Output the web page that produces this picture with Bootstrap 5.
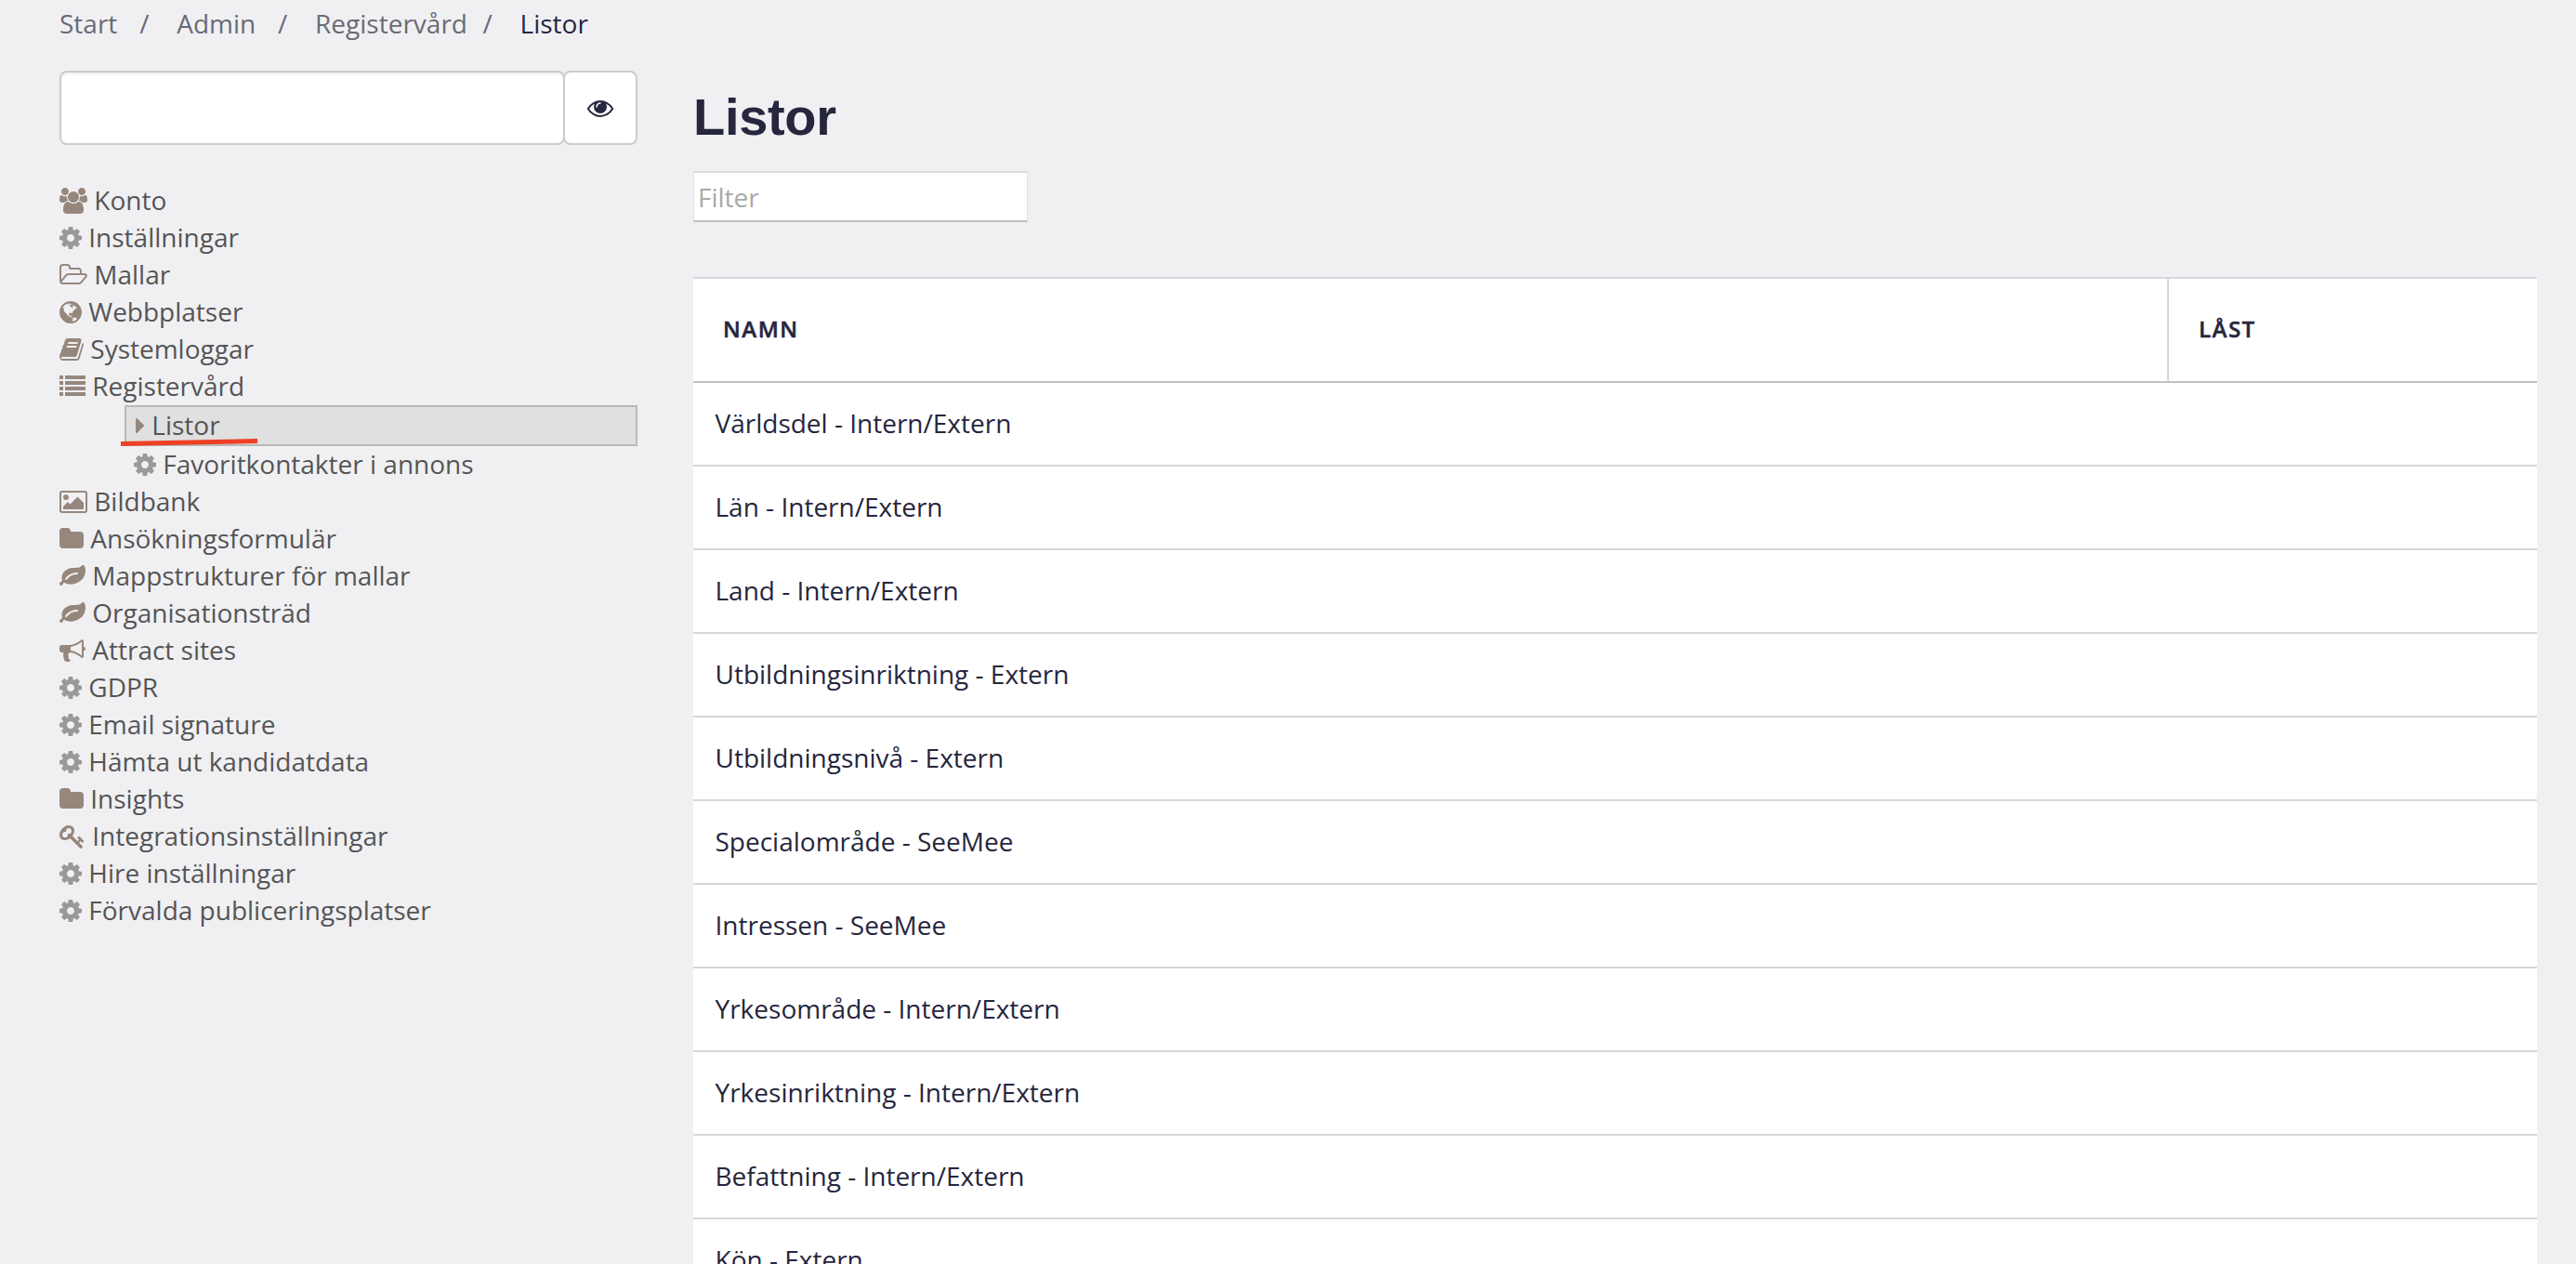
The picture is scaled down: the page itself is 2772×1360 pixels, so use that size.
<!DOCTYPE html>
<html lang="sv">
<head>
  <meta charset="UTF-8" />
  <meta name="viewport" content="width=device-width, initial-scale=1.0"/>
  <title>Listor - Registervård</title>
  <link href="https://cdn.jsdelivr.net/npm/bootstrap@5.3.2/dist/css/bootstrap.min.css" rel="stylesheet" />
  <style>
    body {
      background-color: #f0f0f3;
      color: #26263d;
      font-family: "Open Sans", sans-serif;
      font-size: 28px;
      line-height: 40px;
      height: 100vh;
      overflow: hidden;
    }
    .page {
      padding: 6px 42px 0 64px;
    }
    .crumbs {
      height: 40px;
      line-height: 38px;
      color: #6a6a75;
    }
    .crumbs a {
      color: inherit;
      text-decoration: none;
    }
    .slash {
      margin: 0 29.8px 0 23.8px;
    }
    .slash-tight {
      margin-left: 16.5px;
    }
    .crumbs .current {
      color: #26263d;
    }
    .sidebar {
      width: 622px;
      margin-top: 30px;
    }
    .search-field,
    .search-btn {
      height: 80px;
      border: 2px solid #ccc;
      border-radius: 8px;
      background: #fff;
    }
    .search-field {
      width: 544px;
      box-shadow: inset 0 2px 2px rgba(0,0,0,0.075);
    }
    .search-btn {
      width: 80px;
      margin-left: -2px;
      color: #26263d;
    }
    .menu {
      margin-top: 40px;
      color: #555;
    }
    .menu li {
      height: 40px;
      line-height: 38px;
      white-space: nowrap;
    }
    .menu .sub {
      margin-left: 70px;
      padding-left: 10px;
    }
    .menu .active-item {
      height: 44px;
      background: #e0e0e0;
      border: 2px solid #b9b9b9;
    }
    .ico {
      height: 28px;
      fill: #96877d;
      vertical-align: -4px;
    }
    .ico-cog {
      fill: #999;
    }
    .ico-eye {
      fill: #26263d;
    }
    /* handritad markering över menyvalet */
    .marker {
      position: absolute;
      left: -9px;
      top: 33px;
      width: 150px;
      height: 10px;
      fill: #ee4024;
    }
    .content {
      margin-left: 60px;
      margin-top: 30px;
    }
    .content h1 {
      font-family: "Liberation Sans", sans-serif;
      font-size: 56px;
      font-weight: 700;
      line-height: 64px;
      letter-spacing: -0.3px;
      margin: 18px 0 26px;
    }
    .filter-field {
      width: 360px;
      height: 55px;
      padding: 0 4px;
      border: 1px solid #e2e2e5;
      border-top: 2px solid #dcdce0;
      border-bottom: 2px solid #bebebe;
      border-radius: 0;
      font-size: 28px;
      line-height: 40px;
    }
    .filter-field::placeholder {
      color: #a9a9a9;
    }
    .lists {
      margin-top: 59px;
      background: #fff;
      border-top: 2px solid #d6d6dc;
    }
    .lists-head {
      height: 112px;
      font-size: 24px;
      font-weight: 600;
      letter-spacing: 1.5px;
      line-height: 108px;
      -webkit-text-stroke: 0.5px #26263d;
    }
    .lists-head div {
      border-bottom: 2px solid #c0c0c0;
      padding-left: 32px;
    }
    .lists-head .col-locked {
      width: 398px;
      border-left: 2px solid #d6d6dc;
    }
    .lists-row {
      height: 90px;
      padding-left: 23.5px;
      line-height: 86px;
      border-bottom: 2px solid #d6d6dc;
    }
  </style>
</head>
<body>
  <div class="page">
    <!-- Brödsmulor -->
    <nav class="crumbs d-flex">
      <a href="#">Start</a><span class="slash">/</span>
      <a href="#">Admin</a><span class="slash">/</span>
      <a href="#">Registervård</a><span class="slash slash-tight">/</span>
      <span class="current">Listor</span>
    </nav>

    <div class="d-flex align-items-start">
      <!-- Vänstermeny -->
      <aside class="sidebar flex-shrink-0">
        <div class="d-flex">
          <input type="text" class="search-field" aria-label="Sök">
          <button class="search-btn d-flex align-items-center justify-content-center p-0" id="searchBtn" aria-label="Visa"></button>
        </div>
        <ul class="menu list-unstyled mb-0" id="menu"></ul>
      </aside>

      <!-- Innehåll -->
      <main class="content flex-grow-1">
        <h1>Listor</h1>
        <input type="text" class="filter-field form-control" placeholder="Filter">
        <div class="lists">
          <div class="lists-head d-flex">
            <div class="flex-grow-1">NAMN</div>
            <div class="col-locked">LÅST</div>
          </div>
          <div id="rows"></div>
        </div>
      </main>
    </div>
  </div>

  <script src="https://cdn.jsdelivr.net/npm/bootstrap@5.3.2/dist/js/bootstrap.bundle.min.js"></script>
  <script>
    // x = vänsterkant i ritytan, w = bredd (64 enheter = 1px)
    const icons = {
      eye: { x: 0, w: 1792, d: "M1664 960q-152-236-381-353 61 104 61 225 0 185-131.5 316.5t-316.5 131.5-316.5-131.5-131.5-316.5q0-121 61-225-229 117-381 353 133 205 333.5 326.5t434.5 121.5 434.5-121.5 333.5-326.5zm-720-384q0-20-14-34t-34-14q-125 0-214.5 89.5t-89.5 214.5q0 20 14 34t34 14 34-14 14-34q0-86 61-147t147-61q20 0 34-14t14-34zm848 384q0 34-20 69-140 230-376.5 368.5t-499.5 138.5-499.5-139-376.5-368q-20-35-20-69t20-69q140-229 376.5-368t499.5-139 499.5 139 376.5 368q20 35 20 69z" },
      cog: { x: 128, w: 1536, d: "M1152 896q0-106-75-181t-181-75-181 75-75 181 75 181 181 75 181-75 75-181zm512-109v222q0 12-8 23t-20 13l-185 28q-19 54-39 91 35 50 107 138 10 12 10 25t-9 23q-27 37-99 108t-94 71q-12 0-26-9l-138-108q-44 23-91 38-16 136-29 186-7 28-36 28h-222q-14 0-24.5-8.5t-11.5-21.5l-28-184q-49-16-90-37l-141 107q-10 9-25 9-14 0-25-11-126-114-165-168-7-10-7-23 0-12 8-23 15-21 51-66.5t54-70.5q-27-50-41-99l-183-27q-13-2-21-12.5t-8-23.5v-222q0-12 8-23t19-13l186-28q14-46 39-92-40-57-107-138-10-12-10-24 0-10 9-23 26-36 98.5-107.5t94.5-71.5q13 0 26 10l138 107q44-23 91-38 16-136 29-186 7-28 36-28h222q14 0 24.5 8.5t11.5 21.5l28 184q49 16 90 37l142-107q9-9 24-9 13 0 25 10 129 119 165 170 7 8 7 22 0 12-8 23-15 21-51 66.5t-54 70.5q26 50 41 98l183 28q13 2 21 12.5t8 23.5z" },
      users: { x: -64, w: 1920, d: "M529 896q-162 5-265 128h-134q-82 0-138-40.5t-56-118.5q0-353 124-353 6 0 43.5 21t97.5 42.5 119 21.5q67 0 133-23-5 37-5 66 0 139 81 256zm1071 637q0 120-73 189.5t-194 69.5h-874q-121 0-194-69.5t-73-189.5q0-53 3.5-103.5t14-109 26.5-108.5 43-97.5 62-81 85.5-53.5 111.5-20q10 0 43 21.5t73 48 107 48 135 21.5 135-21.5 107-48 73-48 43-21.5q61 0 111.5 20t85.5 53.5 62 81 43 97.5 26.5 108.5 14 109 3.5 103.5zm-1024-1277q0 106-75 181t-181 75-181-75-75-181 75-181 181-75 181 75 75 181zm704 384q0 159-112.5 271.5t-271.5 112.5-271.5-112.5-112.5-271.5 112.5-271.5 271.5-112.5 271.5 112.5 112.5 271.5zm576 225q0 78-56 118.5t-138 40.5h-134q-103-123-265-128 81-117 81-256 0-29-5-66 66 23 133 23 59 0 119-21.5t97.5-42.5 43.5-21q124 0 124 353zm-128-609q0 106-75 181t-181 75-181-75-75-181 75-181 181-75 181 75 75 181z" },
      folderOpen: { x: 64, w: 1920, d: "M1845 931q0-35-53-35h-1088q-40 0-85.5 21.5t-71.5 52.5l-294 363q-18 24-18 40 0 35 53 35h1088q40 0 86-22t71-53l294-363q18-22 18-39zm-1141-163h768v-160q0-40-28-68t-68-28h-576q-40 0-68-28t-28-68v-64q0-40-28-68t-68-28h-320q-40 0-68 28t-28 68v853l256-315q44-53 116-87.5t140-34.5zm1269 163q0 62-46 120l-295 363q-43 53-116 87.5t-140 34.5h-1088q-92 0-158-66t-66-158v-960q0-92 66-158t158-66h320q92 0 158 66t66 158v32h544q92 0 158 66t66 158v160h192q54 0 99 24.5t67 70.5q15 32 15 68z" },
      globe: { x: 128, w: 1536, d: "M896 128q209 0 385.5 103t279.5 279.5 103 385.5-103 385.5-279.5 279.5-385.5 103-385.5-103-279.5-279.5-103-385.5 103-385.5 279.5-279.5 385.5-103zm274 521q-2 1-9.5 9.5t-13.5 9.5q2 0 4.5-5t5-11 3.5-7q6-7 22-15 14-6 52-12 34-8 51 11-2-2 9.5-13t14.5-12q3-2 15-4.5t15-7.5l2-22q-12 1-17.5-7t-6.5-21q0 2-6 8 0-7-4.5-8t-11.5 1-9 1q-10-3-15-7.5t-8-16.5-4-15q-2-5-9.5-11t-9.5-10q-1-2-2.5-5.5t-3-6.5-4-5.5-5.5-2.5-7 5-7.5 10-4.5 5q-3-2-6-1.5t-4.5 1-4.5 3-5 3.5q-3 2-8.5 3t-8.5 2q15-5-1-11-10-4-16-3 9-4 7.5-12t-8.5-14h5q-1-4-8.5-8.5t-17.5-8.5-13-6q-8-5-34-9.5t-33-.5q-5 6-4.5 10.5t4 14 3.5 12.5q1 6-5.5 13t-6.5 12q0 7 14 15.5t10 21.5q-3 8-16 16t-16 12q-5 8-1.5 18.5t10.5 16.5q2 2 1.5 4t-3.5 4.5-5.5 4-6.5 3.5l-3 2q-11 5-20.5-6t-13.5-26q-7-25-16-30-23-8-29 1-5-13-41-26-25-9-58-4 6-1 0-15-7-15-19-12 3-6 4-17.5t1-13.5q3-13 12-23 1-1 7-8.5t9.5-13.5.5-6q35 4 50-11 5-5 11.5-17t10.5-17q9-6 14-5.5t14.5 5.5 14.5 5q14 1 15.5-11t-7.5-20q12 1 3-17-4-7-8-9-12-4-27 5-8 4 2 8-1-1-9.5 10.5t-16.5 17.5-16-5q-1-1-5.5-13.5t-9.5-13.5q-8 0-16 15 3-8-11-15t-24-8q19-12-8-27-7-4-20.5-5t-19.5 4q-5 7-5.5 11.5t5 8 10.5 5.5 11.5 4 8.5 3q14 10 8 14-2 1-8.5 3.5t-11.5 4.5-6 4q-3 4 0 14t-2 14q-5-5-9-17.5t-7-16.5q7 9-25 6l-10-1q-4 0-16 2t-20.5 1-13.5-8q-4-8 0-20 1-4 4-2-4-3-11-9.5t-10-8.5q-46 15-94 41 6 1 12-1 5-2 13-6.5t10-5.5q34-14 42-7l5-5q14 16 20 25-7-4-30-1-20 6-22 12 7 12 5 18-4-3-11.5-10t-14.5-11-15-5q-16 0-22 1-146 80-235 222 7 7 12 8 4 1 5 9t2.5 11 11.5-3q9 8 3 19 1-1 44 27 19 17 21 21 3 11-10 18-1-2-9-9t-9-4q-3 5 .5 18.5t10.5 12.5q-7 0-9.5 16t-2.5 35.5-1 23.5l2 1q-3 12 5.5 34.5t21.5 19.5q-13 3 20 43 6 8 8 9 3 2 12 7.5t15 10 10 10.5q4 5 10 22.5t14 23.5q-2 6 9.5 20t10.5 23q-1 0-2.5 1t-2.5 1q3 7 15.5 14t15.5 13q1 3 2 10t3 11 8 2q2-20-24-62-15-25-17-29-3-5-5.5-15.5t-4.5-14.5q2 0 6 1.5t8.5 3.5 7.5 4 2 3q-3 7 2 17.5t12 18.5 17 19 12 13q6 6 14 19.5t0 13.5q9 0 20 10t17 20q5 8 8 26t5 24q2 7 8.5 13.5t12.5 9.5l16 8 13 7q5 2 18.5 10.5t21.5 11.5q10 4 16 4t14.5-2.5 13.5-3.5q15-2 29 15t21 21q36 19 55 11-2 1 .5 7.5t8 15.5 9 14.5 5.5 8.5q5 6 18 15t18 15q6-4 7-9-3 8 7 20t18 10q14-3 14-32-31 15-49-18 0-1-2.5-5.5t-4-8.5-2.5-8.5 0-7.5 5-3q9 0 10-3.5t-2-12.5-4-13q-1-8-11-20t-12-15q-5 9-16 8t-16-9q0 1-1.5 5.5t-1.5 6.5q-13 0-15-1 1-3 2.5-17.5t3.5-22.5q1-4 5.5-12t7.5-14.5 4-12.5-4.5-9.5-17.5-2.5q-19 1-26 20-1 3-3 10.5t-5 11.5-9 7q-7 3-24 2t-24-5q-13-8-22.5-29t-9.5-37q0-10 2.5-26.5t3-25-5.5-24.5q3-2 9-9.5t10-10.5q2-1 4.5-1.5t4.5 0 4-1.5 3-6q-1-1-4-3-3-3-4-3 7 3 28.5-1.5t27.5 1.5q15 11 22-2 0-1-2.5-9.5t-.5-13.5q5 27 29 9 3 3 15.5 5t17.5 5q3 2 7 5.5t5.5 4.5 5-.5 8.5-6.5q10 14 12 24 11 40 19 44 7 3 11 2t4.5-9.5 0-14-1.5-12.5l-1-8v-18l-1-8q-15-3-18.5-12t1.5-18.5 15-18.5q1-1 8-3.5t15.5-6.5 12.5-8q21-19 15-35 7 0 11-9-1 0-5-3t-7.5-5-4.5-2q9-5 2-16 5-3 7.5-11t7.5-10q9 12 21 2 7-8 1-16 5-7 20.5-10.5t18.5-9.5q7 2 8-2t1-12 3-12q4-5 15-9t13-5l17-11q3-4 0-4 18 2 31-11 10-11-6-20 3-6-3-9.5t-15-5.5q3-1 11.5-.5t10.5-1.5q15-10-7-16-17-5-43 12zm-163 877q206-36 351-189-3-3-12.5-4.5t-12.5-3.5q-18-7-24-8 1-7-2.5-13t-8-9-12.5-8-11-7q-2-2-7-6t-7-5.5-7.5-4.5-8.5-2-10 1l-3 1q-3 1-5.5 2.5t-5.5 3-4 3 0 2.5q-21-17-36-22-5-1-11-5.5t-10.5-7-10-1.5-11.5 7q-5 5-6 15t-2 13q-7-5 0-17.5t2-18.5q-3-6-10.5-4.5t-12 4.5-11.5 8.5-9 6.5-8.5 5.5-8.5 7.5q-3 4-6 12t-5 11q-2-4-11.5-6.5t-9.5-5.5q2 10 4 35t5 38q7 31-12 48-27 25-29 40-4 22 12 26 0 7-8 20.5t-7 21.5q0 6 2 16z" },
      book: { x: 64, w: 1664, d: "M1703 478q40 57 18 129l-275 906q-19 64-76.5 107.5t-122.5 43.5h-923q-77 0-148.5-53.5t-99.5-131.5q-24-67-2-127 0-4 3-27t4-37q1-8-3-21.5t-3-19.5q2-11 8-21t16.5-23.5 16.5-23.5q23-38 45-91.5t30-91.5q3-10 .5-30t-.5-28q3-11 17-28t17-23q21-36 42-92t25-90q1-9-2.5-32t.5-28q4-13 22-30.5t22-22.5q19-26 42.5-84.5t27.5-96.5q1-8-3-25.5t-2-26.5q2-8 9-18t18-23 17-21q8-12 16.5-30.5t15-35 16-36 19.5-32 26.5-23.5 36-11.5 47.5 5.5l-1 3q38-9 51-9h761q74 0 114 56t18 130l-274 906q-36 119-71.5 153.5t-128.5 34.5h-869q-27 0-38 15-11 16-1 43 24 70 144 70h923q29 0 56-15.5t35-41.5l300-987q7-22 5-57 38 15 59 43zm-1064 2q-4 13 2 22.5t20 9.5h608q13 0 25.5-9.5t16.5-22.5l21-64q4-13-2-22.5t-20-9.5h-608q-13 0-25.5 9.5t-16.5 22.5zm-83 256q-4 13 2 22.5t20 9.5h608q13 0 25.5-9.5t16.5-22.5l21-64q4-13-2-22.5t-20-9.5h-608q-13 0-25.5 9.5t-16.5 22.5z" },
      list: { x: 0, w: 1792, d: "M0 128h256v256H0zM384 128h1408v256H384zM0 512h256v256H0zM384 512h1408v256H384zM0 896h256v256H0zM384 896h1408v256H384zM0 1280h256v256H0zM384 1280h1408v256H384z" },
      caret: { x: 0, w: 640, d: "M576 896q0 26-19 45l-448 448q-19 19-45 19t-45-19-19-45v-896q0-26 19-45t45-19 45 19l448 448q19 19 19 45z" },
      image: { x: -64, w: 1920, d: "M576 576q0 80-56 136t-136 56-136-56-56-136 56-136 136-56 136 56 56 136zm1024 384v448h-1408v-192l320-320 160 160 512-512zm96-704h-1600q-13 0-22.5 9.5t-9.5 22.5v1216q0 13 9.5 22.5t22.5 9.5h1600q13 0 22.5-9.5t9.5-22.5v-1216q0-13-9.5-22.5t-22.5-9.5zm160 32v1216q0 66-47 113t-113 47h-1600q-66 0-113-47t-47-113v-1216q0-66 47-113t113-47h1600q66 0 113 47t47 113z" },
      folder: { x: 64, w: 1664, d: "M1728 608v704q0 92-66 158t-158 66h-1216q-92 0-158-66t-66-158v-960q0-92 66-158t158-66h320q92 0 158 66t66 158v32h672q92 0 158 66t66 158z" },
      leaf: { x: 0, w: 1792, d: "M1280 704q0-26-19-45t-45-19q-172 0-318 49.5t-259.5 134-235.5 219.5q-19 21-19 45 0 26 19 45t45 19q24 0 45-19 27-24 74-71t67-66q137-124 268.5-176t313.5-52q26 0 45-19t19-45zm512-198q0 95-20 193-46 224-184.5 383t-357.5 268q-214 108-438 108-148 0-286-47-15-5-88-42t-96-37q-16 0-39.5 32t-45 70-52.5 70-60 32q-43 0-63.5-17.5t-45.5-59.5q-2-4-6-11t-5.5-10-3-9.5-1.5-13.5q0-35 31-73.5t68-65.5 68-56 31-48q0-4-14-38t-16-44q-9-51-9-104 0-115 43.5-220t119-184.5 170.5-139 204-95.5q55-18 145-25.5t179.5-9 178.5-6 163.5-24 113.5-56.5l29.5-29.5 29.5-28 27-20 36.5-16 43.5-4.5q39 0 70.5 46t47.5 112 24 124 8 96z" },
      bullhorn: { x: 0, w: 1792, d: "M1664 640q53 0 90.5 37.5t37.5 90.5-37.5 90.5-90.5 37.5v384q0 52-38 90t-90 38q-417-347-812-380-58 19-91 66t-31 100.5 40 92.5q-20 33-23 65.5t6 58 33.5 55 48 50 61.5 50.5q-29 58-111.5 83t-168.5 11.5-132-55.5q-7-23-29.5-87.5t-32-94.5-23-89-15-101 3.5-98.5 22-110.5h-122q-66 0-113-47t-47-113v-192q0-66 47-113t113-47h480q435 0 896-384 52 0 90 38t38 90v384zm-128 604v-954q-394 302-768 343v270q377 42 768 341z" },
      key: { x: 0, w: 1792, d: "M832 512q0-80-56-136t-136-56-136 56-56 136q0 42 19 83-41-19-83-19-80 0-136 56t-56 136 56 136 136 56 136-56 56-136q0-42-19-83 41 19 83 19 80 0 136-56t56-136zm851 704q0 17-49 66t-66 49q-9 0-28.5-16t-36.5-33-38.5-40-24.5-26l-96 96 220 220q28 28 28 68 0 42-39 81t-81 39q-40 0-68-28l-671-671q-176 131-365 131-163 0-265.5-102.5t-102.5-265.5q0-160 95-313t248-248 313-95q163 0 265.5 102.5t102.5 265.5q0 189-131 365l355 355 96-96q-3-3-26-24.5t-40-38.5-33-36.5-16-28.5q0-17 49-66t66-49q13 0 23 10 6 6 46 44.5t82 79.5 86.5 86 73 78 28.5 41z" }
    };

    const menu = [
      { icon: "users", text: "Konto" },
      { icon: "cog", text: "Inställningar" },
      { icon: "folderOpen", text: "Mallar" },
      { icon: "globe", text: "Webbplatser" },
      { icon: "book", text: "Systemloggar" },
      { icon: "list", text: "Registervård" },
      { icon: "caret", text: "Listor", sub: true, active: true },
      { icon: "cog", text: "Favoritkontakter i annons", sub: true },
      { icon: "image", text: "Bildbank" },
      { icon: "folder", text: "Ansökningsformulär" },
      { icon: "leaf", text: "Mappstrukturer för mallar" },
      { icon: "leaf", text: "Organisationsträd" },
      { icon: "bullhorn", text: "Attract sites" },
      { icon: "cog", text: "GDPR" },
      { icon: "cog", text: "Email signature" },
      { icon: "cog", text: "Hämta ut kandidatdata" },
      { icon: "folder", text: "Insights" },
      { icon: "key", text: "Integrationsinställningar" },
      { icon: "cog", text: "Hire inställningar" },
      { icon: "cog", text: "Förvalda publiceringsplatser" }
    ];

    const rows = [
      "Världsdel - Intern/Extern",
      "Län - Intern/Extern",
      "Land - Intern/Extern",
      "Utbildningsinriktning - Extern",
      "Utbildningsnivå - Extern",
      "Specialområde - SeeMee",
      "Intressen - SeeMee",
      "Yrkesområde - Intern/Extern",
      "Yrkesinriktning - Intern/Extern",
      "Befattning - Intern/Extern",
      "Kön - Extern"
    ];

    function icon(name) {
      const i = icons[name];
      return `<svg class="ico ico-${name}" width="${i.w / 64}" viewBox="${i.x} 0 ${i.w} 1792"><path d="${i.d}"/></svg>`;
    }

    const marker = `<svg class="marker" viewBox="0 0 150 10"><path d="M3 4 150 1v5L3 9z"/></svg>`;

    document.getElementById("searchBtn").innerHTML = icon("eye");

    document.getElementById("menu").innerHTML = menu.map(m => `
      <li class="${m.sub ? "sub" : ""} ${m.active ? "active-item position-relative" : ""}">${icon(m.icon)} ${m.text}${m.active ? marker : ""}</li>
    `).join("");

    document.getElementById("rows").innerHTML = rows.map(r => `<div class="lists-row">${r}</div>`).join("");
  </script>
</body>
</html>
